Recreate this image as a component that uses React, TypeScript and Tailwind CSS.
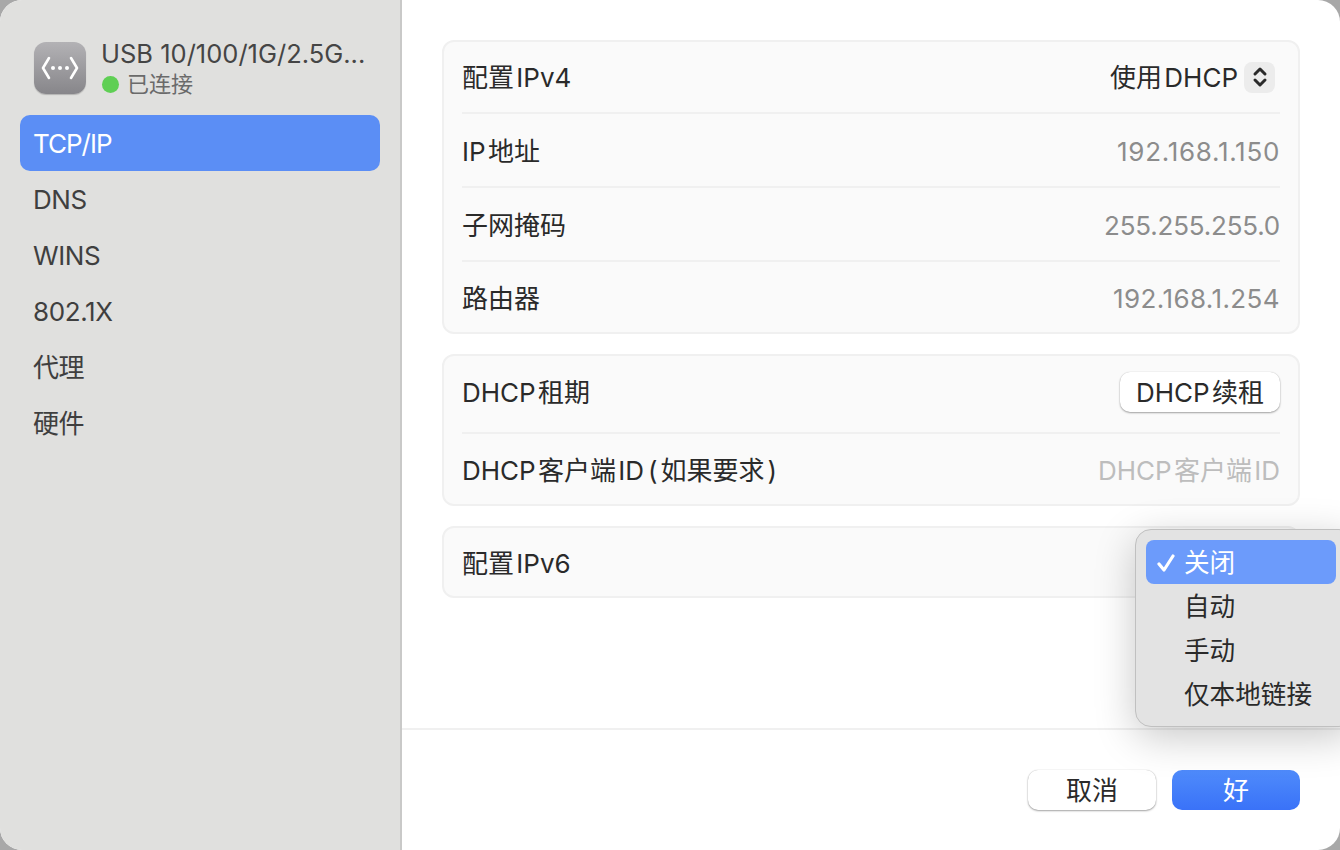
import { ReactNode } from 'react';

const navItems = ['DNS', 'WINS', '802.1X', '代理', '硬件'];
const font = "font-['Inter','Noto_Sans_CJK_SC',sans-serif]";

function Row({ label, children, divider = true, height = 'h-[74px]', offset = '' }: { label: ReactNode; children?: ReactNode; divider?: boolean; height?: string; offset?: string }) {
  return (
    <div className={`flex items-center justify-between ${height} ${offset} ${divider ? 'border-b-2 border-[#f0f0f0]' : ''}`}>
      <span className="text-[26px] text-[#2a2a2a]">{label}</span>
      {children}
    </div>
  );
}

export default function App() {
  return (
    <div className={`relative flex h-[850px] w-[1340px] overflow-hidden bg-[#a8a8a8] ${font}`}>
      <div className="flex w-full overflow-hidden rounded-[22px] bg-white">
        <aside className="w-[402px] shrink-0 border-r-2 border-[#c9c9c8] bg-[#e0e0de] px-5 pt-10">
          <div className="flex h-[56px] items-center gap-[15px] pl-[14px]">
            <div className="flex h-[52px] w-[52px] shrink-0 items-center justify-center rounded-[12px] bg-gradient-to-b from-[#b3b2b5] to-[#87868a] shadow-[0_1px_1px_rgba(0,0,0,0.2)]">
              <svg width="38" height="24" viewBox="0 0 38 24" fill="none" stroke="#fff" strokeWidth="2.6" strokeLinecap="round" strokeLinejoin="round">
                <path d="M8 2 2 12l6 10" />
                <path d="M30 2l6 10-6 10" />
                <circle cx="12" cy="12" r="2" fill="#fff" stroke="none" />
                <circle cx="19" cy="12" r="2" fill="#fff" stroke="none" />
                <circle cx="26" cy="12" r="2" fill="#fff" stroke="none" />
              </svg>
            </div>
            <div className="min-w-0">
              <div className="mt-[2px] text-[25.5px] leading-[30px] whitespace-nowrap text-[#454545]">USB 10/100/1G/2.5G...</div>
              <div className="flex items-center gap-[8px] pl-[1px] text-[22px] leading-[30px] text-[#6a6a6a]">
                <span className="h-[17px] w-[17px] rounded-full bg-[#5fcf54]" />
                已连接
              </div>
            </div>
          </div>
          <div className="mt-[19px] flex h-14 items-center rounded-[10px] bg-[#5b8ef5] pl-[13px] text-[26px] tracking-[-1px] text-white">TCP/IP</div>
          {navItems.map((item) => (
            <div key={item} className="flex h-14 items-center pl-[13px] text-[26px] tracking-[-0.4px] text-[#3f3f3f]">
              {item}
            </div>
          ))}
        </aside>

        <main className="flex min-w-0 flex-1 flex-col [word-spacing:-5px]">
          <div className="h-[730px] border-b-2 border-[#f0f0f0] px-10 pt-10">
            <section className="rounded-[12px] border-2 border-[#f0f0f0] bg-[#fafafa] px-[18px]">
              <Row label="配置 IPv4" height="h-[72px]">
                <div className="mr-[5px] flex items-center gap-[6px]">
                  <span className="text-[26px] text-[#2a2a2a]">使用 DHCP</span>
                  <span className="flex h-[31px] w-[31px] items-center justify-center rounded-[8px] bg-[#ececec]">
                    <svg width="16" height="24" viewBox="0 0 16 24" fill="none" stroke="#2a2a2a" strokeWidth="3" strokeLinecap="round" strokeLinejoin="round">
                      <path d="M3 9l5-5 5 5" />
                      <path d="M3 15l5 5 5-5" />
                    </svg>
                  </span>
                </div>
              </Row>
              <Row label="IP 地址" offset="pt-[2px]"><span className="text-[26px] tracking-[0.7px] text-[#8c8c8c]">192.168.1.150</span></Row>
              <Row label="子网掩码" offset="pt-[2px]"><span className="text-[26px] tracking-[-0.2px] text-[#8c8c8c]">255.255.255.0</span></Row>
              <Row label="路由器" divider={false} height="h-[70px]" offset="pt-[3px]"><span className="text-[26px] tracking-[0.4px] text-[#8c8c8c]">192.168.1.254</span></Row>
            </section>

            <section className="mt-5 rounded-[12px] border-2 border-[#f0f0f0] bg-[#fafafa] px-[18px]">
              <Row label="DHCP 租期" height="h-[78px]" offset="pb-[4px]">
                <button className="h-10 w-[160px] rounded-[10px] bg-white text-[26px] [word-spacing:-5px] text-[#2a2a2a] shadow-[0_1px_2px_rgba(0,0,0,0.35),0_0_1px_rgba(0,0,0,0.2)]">DHCP 续租</button>
              </Row>
              <Row
                label={
                  <>
                    DHCP 客户端 ID
                    <span className="ml-[4px]">
                      (<span className="mx-[3px]">如果要求</span>)
                    </span>
                  </>
                }
                divider={false}
                height="h-[70px]"
                offset="pt-[3px]"
              >
                <span className="text-[26px] text-[#bdbdbd]">DHCP 客户端 ID</span>
              </Row>
            </section>

            <section className="mt-5 rounded-[12px] border-2 border-[#f0f0f0] bg-[#fafafa] px-[18px]">
              <Row label="配置 IPv6" divider={false} height="h-[68px]" offset="pt-[2px]" />
            </section>
          </div>

          <div className="flex flex-1 items-start justify-end gap-4 pt-[40px] pr-10">
            <button className="h-10 w-[128px] rounded-[10px] bg-white text-[26px] text-[#2a2a2a] shadow-[0_1px_2px_rgba(0,0,0,0.35),0_0_1px_rgba(0,0,0,0.25)]">取消</button>
            <button className="h-10 w-[128px] rounded-[10px] bg-gradient-to-b from-[#4f8bfb] to-[#3a72f8] text-[26px] text-white">好</button>
          </div>
        </main>
      </div>

      <div className="absolute top-[529px] left-[1135px] h-[198px] w-[220px] rounded-[16px] border border-[#c0c0c0] bg-[#e3e3e3] px-[10px] py-[10px] shadow-[0_10px_40px_rgba(0,0,0,0.22)]">
        <div className="flex h-11 w-[190px] items-center rounded-[8px] bg-[#6c9bfb] pt-[2px] text-[25.6px] text-white">
          <svg className="ml-[11px]" width="18" height="18" viewBox="0 0 18 18" fill="none" stroke="#fff" strokeWidth="3.2" strokeLinecap="round" strokeLinejoin="round">
            <path d="M2 10l5 6L16 2" />
          </svg>
          <span className="ml-[9px]">关闭</span>
        </div>
        {['自动', '手动', '仅本地链接'].map((item) => (
          <div key={item} className="flex h-11 items-center pt-[2px] pl-[38px] text-[25.6px] text-[#2a2a2a]">
            {item}
          </div>
        ))}
      </div>
    </div>
  );
}
